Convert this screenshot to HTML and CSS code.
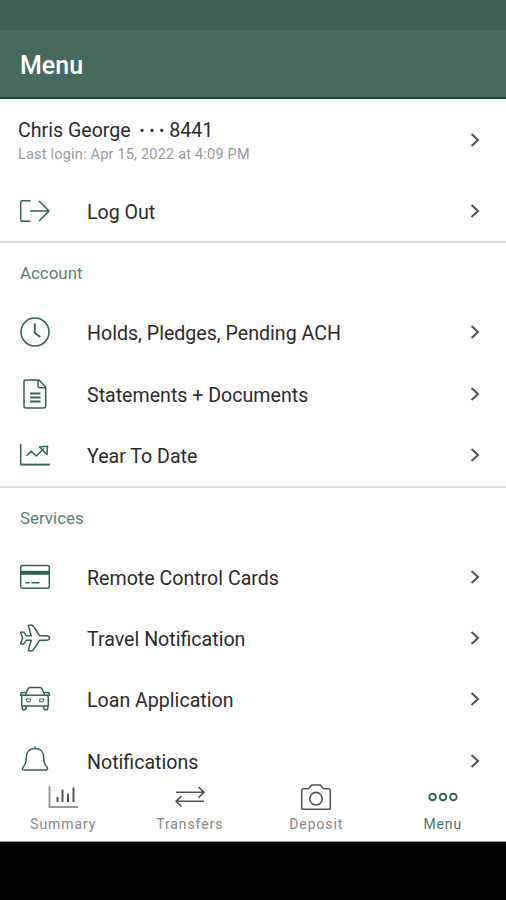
FILE: index.html
```
<!DOCTYPE html>
<html lang="en">
<head>
    <meta charset="UTF-8">
    <meta name="viewport" content="width=device-width, initial-scale=1.0">
    <title>Menu</title>
    <link rel="stylesheet" href="styles.css">
</head>
<body>
    <!-- Shared chevron -->
    <svg class="defs" width="0" height="0">
        <symbol id="chevron" viewBox="0 0 12 16">
            <path d="M2.5 2 L9 8 L2.5 14"/>
        </symbol>
    </svg>

    <div class="screen">
        <div class="status-bar"></div>
        <header class="header">
            <h1>Menu</h1>
        </header>

        <main class="content">
            <section class="section">
                <a class="profile">
                    <div class="profile-info">
                        <div class="profile-name">Chris George <span class="dots">•••</span>8441</div>
                        <div class="profile-login">Last login: Apr 15, 2022 at 4:09 PM</div>
                    </div>
                    <svg class="chevron"><use href="#chevron"/></svg>
                </a>
                <a class="row">
                    <svg class="icon" viewBox="0 0 32 32">
                        <path d="M11.5 5.7 H3.5 Q1.7 5.7 1.7 7.5 V24.5 Q1.7 26.3 3.5 26.3 H11.5"/>
                        <path d="M11 16 H29.5 M20 6 L30 16 L20 26"/>
                    </svg>
                    <span class="label">Log Out</span>
                    <svg class="chevron"><use href="#chevron"/></svg>
                </a>
            </section>

            <section class="section">
                <h2>Account</h2>
                <a class="row">
                    <svg class="icon" viewBox="0 0 32 32">
                        <circle cx="16" cy="16" r="14"/>
                        <path class="bold" d="M15.8 7.5 V17 L21.3 21"/>
                    </svg>
                    <span class="label">Holds, Pledges, Pending ACH</span>
                    <svg class="chevron"><use href="#chevron"/></svg>
                </a>
                <a class="row">
                    <svg class="icon" viewBox="0 0 32 32">
                        <path d="M7 2 H20 L26.7 9 V27.5 Q26.7 30 24.5 30 H7 Q5 30 5 28 V4 Q5 2 7 2 Z"/>
                        <path d="M19 2 V8 Q19 9.7 20.7 9.7 H26.5"/>
                        <path class="bold" d="M11 15.5 H21.5 M11 19.5 H21.5 M11 23.5 H21.5"/>
                    </svg>
                    <span class="label">Statements + Documents</span>
                    <svg class="chevron"><use href="#chevron"/></svg>
                </a>
                <a class="row">
                    <svg class="icon" viewBox="0 0 32 32">
                        <path d="M1.7 5 V25.5"/>
                        <path class="bold" d="M1.2 25.6 H31"/>
                        <path d="M7.5 16.8 L12.3 12 L17.3 17 L25 9.5 M20.5 8 L28.5 7.3 L28 15.5 Z"/>
                    </svg>
                    <span class="label">Year To Date</span>
                    <svg class="chevron"><use href="#chevron"/></svg>
                </a>
            </section>

            <section class="section">
                <h2>Services</h2>
                <a class="row">
                    <svg class="icon" viewBox="0 0 32 32">
                        <rect x="1.7" y="4.5" width="28.6" height="22.8" rx="2"/>
                        <rect class="fill" x="1.7" y="9.8" width="28.6" height="4"/>
                        <path d="M6.5 21.8 H10.5 M12.5 21.8 H20.5"/>
                    </svg>
                    <span class="label">Remote Control Cards</span>
                    <svg class="chevron"><use href="#chevron"/></svg>
                </a>
                <a class="row">
                    <svg class="icon" viewBox="0 0 32 32">
                        <path d="M30.5 16 Q30.5 13.7 27 13.7 H20.5 L14.3 4.2 Q12 2.4 9.3 3.5 L12.2 13.7 H7.3 L5.3 10.7 Q3.5 9.3 1.5 10.5 L3.7 16 L1.5 21.5 Q3.5 22.7 5.3 21.3 L7.3 18.3 H12.2 L9.3 28.5 Q12 29.6 14.3 27.8 L20.5 18.3 H27 Q30.5 18.3 30.5 16 Z"/>
                    </svg>
                    <span class="label">Travel Notification</span>
                    <svg class="chevron"><use href="#chevron"/></svg>
                </a>
                <a class="row">
                    <svg class="icon" viewBox="0 0 32 32">
                        <path d="M6.3 12 L9 5.7 Q9.7 4.5 11 4.5 H21 Q22.3 4.5 23 5.7 L25.7 12"/>
                        <path d="M6.8 9.6 H3.5 Q1.3 9.6 1.5 12.2 H30.5 Q30.7 9.6 28.5 9.6 H25.2"/>
                        <path d="M4 12.2 Q2.7 13 2.7 15 V23 H29.3 V15 Q29.3 13 28 12.2"/>
                        <path d="M3.2 23 V25 Q3.2 26.8 5.2 26.8 Q7.2 26.8 7.2 25 V23 M24.8 23 V25 Q24.8 26.8 26.8 26.8 Q28.8 26.8 28.8 25 V23"/>
                        <path class="thin" d="M7 16 H11.3 V18.8 H8 Z M25 16 H20.7 V18.8 H24 Z"/>
                    </svg>
                    <span class="label">Loan Application</span>
                    <svg class="chevron"><use href="#chevron"/></svg>
                </a>
                <a class="row">
                    <svg class="icon" viewBox="0 0 32 32">
                        <path d="M16 1.5 V4 M16 3.5 C10 3.5 7.3 7.5 7.3 12.5 C7.3 18 6.5 19.8 4 22.3 Q2.5 24.8 5.2 25 H26.8 Q29.5 24.8 28 22.3 C25.5 19.8 24.7 18 24.7 12.5 C24.7 7.5 22 3.5 16 3.5"/>
                    </svg>
                    <span class="label">Notifications</span>
                    <svg class="chevron"><use href="#chevron"/></svg>
                </a>
            </section>
        </main>

        <nav class="tabs">
            <a class="tab">
                <svg class="tab-icon" viewBox="0 0 32 30">
                    <path class="axis" d="M2.5 4 V25 H31"/>
                    <path class="bars" d="M10.5 20 V15 M15.5 20 V7.5 M21 20 V11.5 M26.5 20 V5.5"/>
                </svg>
                <span>Summary</span>
            </a>
            <a class="tab">
                <svg class="tab-icon" viewBox="0 0 32 30">
                    <path d="M2 10.3 H30 M24.5 5 L30 10.3 L24.5 15.6"/>
                    <path d="M30 19.3 H2 M7.5 14 L2 19.3 L7.5 24.6"/>
                </svg>
                <span>Transfers</span>
            </a>
            <a class="tab">
                <svg class="tab-icon" viewBox="0 0 32 30">
                    <path d="M3.5 6.8 H8.5 L11.5 3 H20.5 L23.5 6.8 H28.5 Q30.3 6.8 30.3 8.5 V25.5 Q30.3 27.3 28.5 27.3 H3.5 Q1.7 27.3 1.7 25.5 V8.5 Q1.7 6.8 3.5 6.8 Z"/>
                    <circle cx="16" cy="16.7" r="6.3"/>
                </svg>
                <span>Deposit</span>
            </a>
            <a class="tab active">
                <svg class="tab-icon" viewBox="0 0 32 30">
                    <circle cx="5.6" cy="15" r="3.3"/>
                    <circle cx="16" cy="15" r="3.3"/>
                    <circle cx="26.4" cy="15" r="3.3"/>
                </svg>
                <span>Menu</span>
            </a>
        </nav>
        <div class="nav-bar"></div>
    </div>
</body>
</html>
```

FILE: styles.css
```
* {
    box-sizing: border-box;
}
body {
    margin: 0;
    font-family: Roboto, "Liberation Sans", sans-serif;
    background: #fff;
    color: #2b2b2b;
}
.defs {
    display: none;
}
.screen {
    display: flex;
    flex-direction: column;
    height: 900px;
    overflow: hidden;
}
.status-bar {
    flex: none;
    height: 30px;
    background: #3e6153;
}
.header {
    flex: none;
    display: flex;
    align-items: center;
    height: 69px;
    padding: 4px 20px 0;
    background: #466b5d;
    border-bottom: 2px solid #0f4a35;
}
h1 {
    margin: 0;
    font-size: 25px;
    font-weight: 500;
    color: #fff;
}
.content {
    flex: none;
    height: 680px;
    overflow: hidden;
}
.section + .section {
    border-top: 2px solid #dcdcdc;
}
.profile {
    display: flex;
    align-items: center;
    height: 81px;
    padding: 0 25px 0 18px;
}
.profile-info {
    flex: 1;
    padding-top: 4px;
}
.profile-name {
    font-size: 19.6px;
    line-height: 25px;
}
.dots {
    margin-left: 4px;
    font-size: 14px;
    font-weight: 500;
    letter-spacing: 5px;
    vertical-align: 1px;
}
.profile-login {
    font-size: 14.5px;
    line-height: 21px;
    letter-spacing: 0.2px;
    color: #999;
}
.row {
    display: flex;
    align-items: center;
    height: 61.3px;
    padding: 0 25px 0 19px;
}
.icon {
    flex: none;
    width: 32px;
    height: 32px;
    margin-right: 36px;
    fill: none;
    stroke: #2f6450;
    stroke-width: 1.5;
    stroke-linejoin: round;
}
.icon .bold {
    stroke-width: 1.9;
}
.icon .thin {
    stroke-width: 1;
}
.icon .fill {
    fill: #2f6450;
    stroke: none;
}
.label {
    flex: 1;
    padding-top: 3px;
    font-size: 19.6px;
}
.chevron {
    flex: none;
    width: 12px;
    height: 16px;
    fill: none;
    stroke: #505050;
    stroke-width: 2;
}
h2 {
    height: 58.5px;
    margin: 0;
    padding-left: 20px;
    font-size: 16.9px;
    font-weight: 400;
    line-height: 60px;
    color: #5b8071;
}
.tabs {
    flex: none;
    display: flex;
    height: 63px;
    border-bottom: 1px solid #999;
}
.tab {
    flex: 1;
    display: flex;
    flex-direction: column;
    align-items: center;
    padding-top: 3px;
    font-size: 14px;
    line-height: 24px;
    letter-spacing: 0.9px;
    color: #858585;
}
.tab-icon {
    width: 32px;
    height: 30px;
    fill: none;
    stroke: #555;
    stroke-width: 1.6;
}
.tab-icon .axis {
    stroke: #999;
    stroke-width: 2;
}
.tab-icon .bars {
    stroke-width: 2;
}
.active {
    color: #4c7565;
}
.active .tab-icon {
    stroke: #2f6450;
    stroke-width: 1.9;
}
.nav-bar {
    flex: 1;
    background: #000;
}
```
